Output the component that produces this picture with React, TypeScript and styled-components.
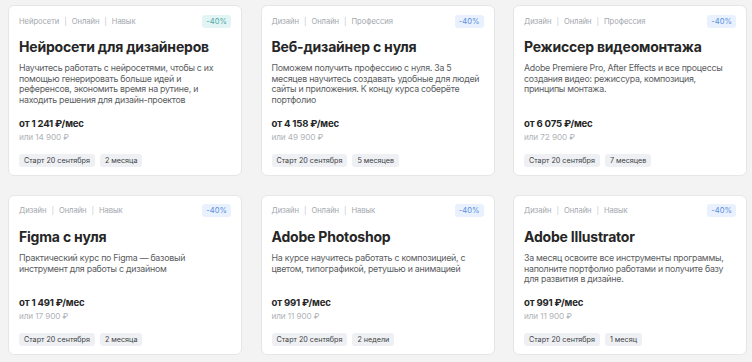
import React from 'react';
import styled, { createGlobalStyle } from 'styled-components';

const GlobalStyle = createGlobalStyle`
  body {
    margin: 0;
    background: #f3f3f3;
    font-family: Inter, "Noto Sans", sans-serif;
  }
`

const Grid = styled.div`
  display: grid;
  grid-template-columns: repeat(3, 234px);
  column-gap: 18.5px;
  row-gap: 19px;
  padding: 5px 0 0 8px;
`

const Card = styled.div`
  display: flex;
  flex-direction: column;
  background: #fff;
  border: 1px solid #e6e6e6;
  border-radius: 6px;
  padding: 8px 9px 8px 10px;
  box-sizing: border-box;
`

const Top = styled.div`
  display: flex;
  justify-content: space-between;
  align-items: center;
  height: 14px;
`

const Tags = styled.div`
  display: flex;
  align-items: center;
  gap: 5px;
  font-size: 7.6px;
  color: #a3a7ae;
  letter-spacing: -0.05px;
`

const Sep = styled.span`
  color: #c4c7cc;
`

const Badge = styled.span<{ $teal?: boolean }>`
  font-size: 7.6px;
  padding: 2px 4px;
  margin-right: 1px;
  border-radius: 3px;
  background: ${p => (p.$teal ? '#e2f4f4' : '#e8f1fd')};
  color: ${p => (p.$teal ? '#4fa8a8' : '#5a8fe0')};
`

const Title = styled.div`
  margin-top: 10px;
  font-size: 14px;
  font-weight: 700;
  color: #262626;
  letter-spacing: -0.2px;
`

const Desc = styled.div`
  margin-top: 8px;
  margin-bottom: 12px;
  font-size: 8.8px;
  line-height: 10.7px;
  letter-spacing: -0.25px;
  color: #5b5d61;
`

const Price = styled.div`
  margin-top: auto;
  font-size: 9.6px;
  font-weight: 700;
  letter-spacing: -0.2px;
  color: #262626;
`

const Old = styled.div`
  margin-top: 3px;
  font-size: 8.2px;
  letter-spacing: -0.1px;
  color: #b0b3b8;
`

const Chips = styled.div`
  display: flex;
  gap: 5px;
  margin-top: 12px;
`

const Chip = styled.span`
  font-size: 7.2px;
  line-height: 9px;
  color: #3d3f43;
  background: #eef0f3;
  border-radius: 3px;
  padding: 2px 5px;
`

const courses = [
  {
    tags: ['Нейросети', 'Онлайн', 'Навык'],
    teal: true,
    title: 'Нейросети для дизайнеров',
    desc: 'Научитесь работать с нейросетями, чтобы с их помощью генерировать больше идей и референсов, экономить время на рутине, и находить решения для дизайн-проектов',
    price: 'от 1 241 ₽/мес',
    old: 'или 14 900 ₽',
    len: '2 месяца',
  },
  {
    tags: ['Дизайн', 'Онлайн', 'Профессия'],
    title: 'Веб-дизайнер с нуля',
    desc: 'Поможем получить профессию с нуля. За 5 месяцев научитесь создавать удобные для людей сайты и приложения. К концу курса соберёте портфолио',
    price: 'от 4 158 ₽/мес',
    old: 'или 49 900 ₽',
    len: '5 месяцев',
  },
  {
    tags: ['Дизайн', 'Онлайн', 'Профессия'],
    title: 'Режиссер видеомонтажа',
    desc: 'Adobe Premiere Pro, After Effects и все процессы создания видео: режиссура, композиция, принципы монтажа.',
    price: 'от 6 075 ₽/мес',
    old: 'или 72 900 ₽',
    len: '7 месяцев',
  },
  {
    tags: ['Дизайн', 'Онлайн', 'Навык'],
    title: 'Figma с нуля',
    desc: 'Практический курс по Figma — базовый инструмент для работы с дизайном',
    price: 'от 1 491 ₽/мес',
    old: 'или 17 900 ₽',
    len: '2 месяца',
  },
  {
    tags: ['Дизайн', 'Онлайн', 'Навык'],
    title: 'Adobe Photoshop',
    desc: 'На курсе научитесь работать с композицией, с цветом, типографикой, ретушью и анимацией',
    price: 'от 991 ₽/мес',
    old: 'или 11 900 ₽',
    len: '2 недели',
  },
  {
    tags: ['Дизайн', 'Онлайн', 'Навык'],
    title: 'Adobe Illustrator',
    desc: 'За месяц освоите все инструменты программы, наполните портфолио работами и получите базу для развития в дизайне.',
    price: 'от 991 ₽/мес',
    old: 'или 11 900 ₽',
    len: '1 месяц',
  },
]

const App = () => {
  return (
    <>
      <GlobalStyle />
      <Grid>
        {courses.map((c, i) => (
          <Card key={i}>
            <Top>
              <Tags>
                {c.tags.map((t, j) => (
                  <React.Fragment key={t}>
                    {j > 0 && <Sep>|</Sep>}
                    <span>{t}</span>
                  </React.Fragment>
                ))}
              </Tags>
              <Badge $teal={c.teal}>-40%</Badge>
            </Top>
            <Title>{c.title}</Title>
            <Desc>{c.desc}</Desc>
            <Price>{c.price}</Price>
            <Old>{c.old}</Old>
            <Chips>
              <Chip>Старт 20 сентября</Chip>
              <Chip>{c.len}</Chip>
            </Chips>
          </Card>
        ))}
      </Grid>
    </>
  )
}

export default App
